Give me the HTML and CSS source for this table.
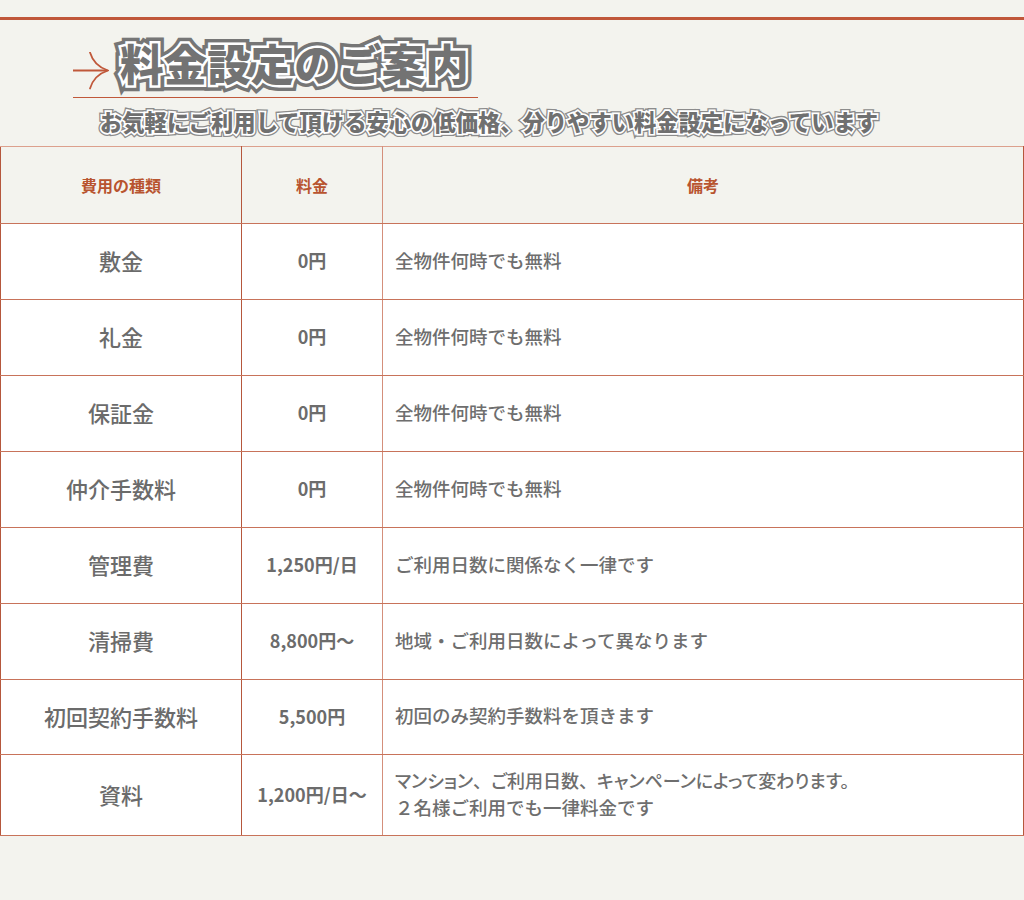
FILE: index.html
```html
<!DOCTYPE html>
<html lang="ja">
<head>
<meta charset="utf-8">
<title>料金設定のご案内</title>
<link rel="stylesheet" href="styles.css">
</head>
<body>
<div class="page">
  <header class="intro">
    <div class="heading-row">
      <svg class="arrow" width="36" height="38" viewBox="0 0 36 38" aria-hidden="true">
        <path d="M0 18.5 H34.5" fill="none" stroke="#c0583a" stroke-width="1.8"/>
        <path d="M17 0.5 Q21 14 35 18.5 Q21 23 17 36.5" fill="none" stroke="#c0583a" stroke-width="1.8" stroke-linecap="round"/>
      </svg>
      <h1 class="title" data-text="料金設定のご案内">料金設定のご案内</h1>
    </div>
    <p class="lead" data-text="お気軽にご利用して頂ける安心の低価格、分りやすい料金設定になっています">お気軽にご利用して頂ける安心の低価格、分りやすい料金設定になっています</p>
  </header>

  <table class="price-table">
    <colgroup>
      <col class="c-type">
      <col class="c-fee">
      <col class="c-note">
    </colgroup>
    <thead>
      <tr>
        <th>費用の種類</th>
        <th>料金</th>
        <th>備考</th>
      </tr>
    </thead>
    <tbody>
      <tr><td class="type">敷金</td><td class="fee">0円</td><td class="note">全物件何時でも無料</td></tr>
      <tr><td class="type">礼金</td><td class="fee">0円</td><td class="note">全物件何時でも無料</td></tr>
      <tr><td class="type">保証金</td><td class="fee">0円</td><td class="note">全物件何時でも無料</td></tr>
      <tr><td class="type">仲介手数料</td><td class="fee">0円</td><td class="note">全物件何時でも無料</td></tr>
      <tr><td class="type">管理費</td><td class="fee">1,250円/日</td><td class="note">ご利用日数に関係なく一律です</td></tr>
      <tr><td class="type">清掃費</td><td class="fee">8,800円～</td><td class="note">地域・ご利用日数によって異なります</td></tr>
      <tr class="short"><td class="type">初回契約手数料</td><td class="fee">5,500円</td><td class="note">初回のみ契約手数料を頂きます</td></tr>
      <tr class="tall"><td class="type">資料</td><td class="fee">1,200円/日～</td><td class="note"><span class="prop">マンション<span class="full">、</span>ご利用日数<span class="full">、</span>キャンペーンによって変わります。</span><br>２名様ご利用でも一律料金です</td></tr>
    </tbody>
  </table>
</div>
</body>
</html>
```

FILE: styles.css
```css
html, body {
  margin: 0;
  padding: 0;
  background: #f3f3ee;
}

body {
  font-family: "Noto Sans CJK JP", "Noto Sans", sans-serif;
  color: #6e6e6e;
}

.page {
  margin-top: 17px;
  border-top: 3px solid #c0573a;
}

.intro {
  padding-bottom: 14px;
}

.heading-row {
  display: flex;
  align-items: flex-start;
  gap: 11px;
  width: 405px;
  height: 77px;
  margin-left: 73px;
  border-bottom: 1px solid #c0583a;
}

.arrow {
  flex: none;
  margin-top: 32px;
}

.title {
  position: relative;
  isolation: isolate;
  margin: 21px 0 0 0;
  font-size: 43.6px;
  line-height: 1;
  font-weight: 900;
  color: #737373;
  white-space: nowrap;
}

.title::before,
.title::after,
.lead::before,
.lead::after {
  content: attr(data-text);
  position: absolute;
  left: 0;
  top: 0;
  z-index: -1;
  white-space: nowrap;
}

.title::before {
  color: #767676;
  -webkit-text-stroke: 12px #767676;
}

.title::after {
  color: #ffffff;
  -webkit-text-stroke: 5px #ffffff;
}

.lead {
  position: relative;
  isolation: isolate;
  display: block;
  width: max-content;
  margin: 12px 0 0 100px;
  font-size: 22.3px;
  line-height: 22px;
  font-weight: 900;
  color: #707070;
  white-space: nowrap;
}

.lead::before {
  color: #8c8c8c;
  -webkit-text-stroke: 6px #8c8c8c;
}

.lead::after {
  color: #ffffff;
  -webkit-text-stroke: 3.4px #ffffff;
}

.price-table {
  width: 1024px;
  border-collapse: collapse;
  table-layout: fixed;
  background: #ffffff;
}

.c-type { width: 241px; }
.c-fee { width: 141px; }

.price-table th,
.price-table td {
  border: 1px solid #c8735a;
  padding: 0;
}

.price-table thead th {
  height: 76px;
  background: #f3f3ee;
  color: #b8542f;
  font-size: 16px;
  font-weight: 700;
  text-align: center;
  border-top-color: #dca08d;
}

.price-table thead th:nth-child(2),
.price-table tbody td:nth-child(2) {
  border-right-color: #d48f7b;
}

.price-table td:first-child,
.price-table th:first-child {
  border-left-color: #b5573c;
  border-right-color: #b5573c;
}

.price-table td:last-child,
.price-table th:last-child {
  border-right-color: #b5573c;
}

.price-table tbody td {
  height: 72px;
  padding-bottom: 3px;
}

.price-table tbody tr.short td {
  height: 71px;
}

.price-table tbody tr.tall td {
  height: auto;
  padding-top: 12px;
  padding-bottom: 14px;
}

.type {
  text-align: center;
  font-size: 22px;
  font-weight: 500;
  color: #6b6b6b;
}

.fee {
  text-align: center;
  font-size: 18px;
  font-weight: 700;
  color: #6c6c6c;
}

.price-table td.note {
  padding-left: 12px;
  font-size: 18.5px;
  font-weight: 500;
  color: #6e6e6e;
  line-height: 27px;
}

.prop {
  font-size: 18px;
  font-feature-settings: "palt";
}

.full {
  font-feature-settings: normal;
}
```
